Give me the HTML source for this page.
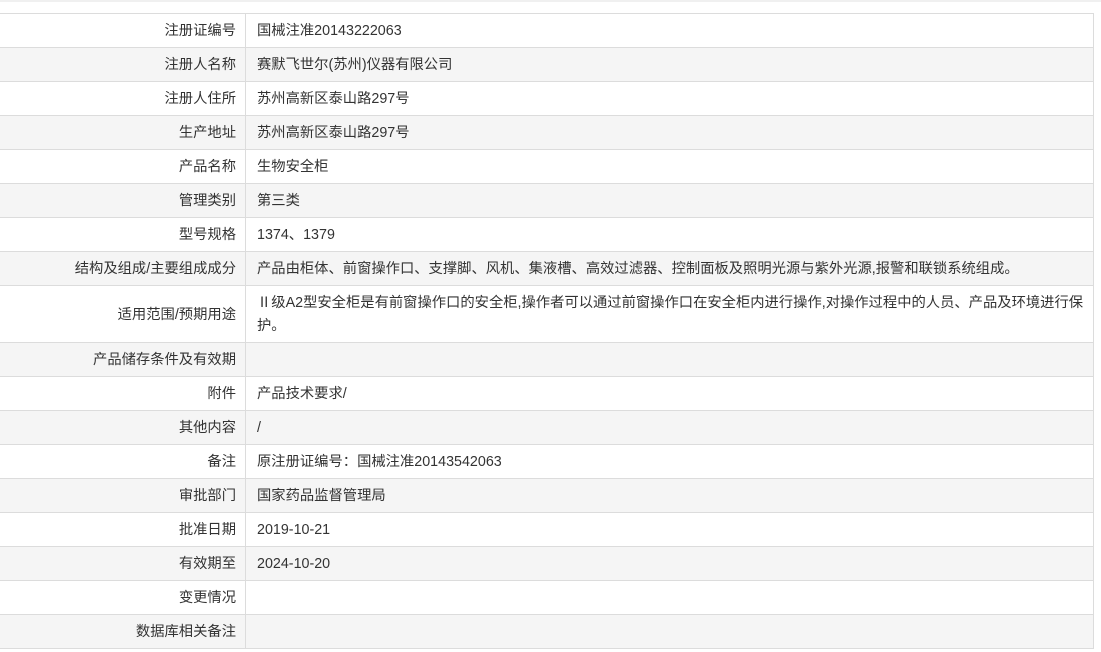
<!DOCTYPE html>
<html><head><meta charset="utf-8"><style>
body{margin:0;background:#fff;font-family:"Liberation Sans","Noto Sans CJK SC",sans-serif;font-size:14.3px;color:#333;}
.top{height:2px;background:#f0f0f0;}
table{position:absolute;left:-1px;top:13px;width:1095px;border-collapse:collapse;table-layout:fixed;}
td{border:1px solid #dcdcdc;height:32px;padding:0;line-height:20px;padding-top:1px;}
td.l{width:236px;text-align:right;padding-right:9px;}
td.r{padding-left:11px;padding-right:8px;}
tr:nth-child(even) td{background:#f5f5f5;}
tr.tall td.l{height:55px;}
tr.tall td.r{vertical-align:top;padding-top:6px;height:50px;line-height:23px;}
</style></head><body><div class="top"></div>
<table>
<tr><td class="l">注册证编号</td><td class="r">国械注准20143222063</td></tr>
<tr><td class="l">注册人名称</td><td class="r">赛默飞世尔(苏州)仪器有限公司</td></tr>
<tr><td class="l">注册人住所</td><td class="r">苏州高新区泰山路297号</td></tr>
<tr><td class="l">生产地址</td><td class="r">苏州高新区泰山路297号</td></tr>
<tr><td class="l">产品名称</td><td class="r">生物安全柜</td></tr>
<tr><td class="l">管理类别</td><td class="r">第三类</td></tr>
<tr><td class="l">型号规格</td><td class="r">1374、1379</td></tr>
<tr><td class="l">结构及组成/主要组成成分</td><td class="r">产品由柜体、前窗操作口、支撑脚、风机、集液槽、高效过滤器、控制面板及照明光源与紫外光源,报警和联锁系统组成。</td></tr>
<tr class="tall"><td class="l">适用范围/预期用途</td><td class="r">Ⅱ级A2型安全柜是有前窗操作口的安全柜,操作者可以通过前窗操作口在安全柜内进行操作,对操作过程中的人员、产品及环境进行保<br>护。</td></tr>
<tr><td class="l">产品储存条件及有效期</td><td class="r"></td></tr>
<tr><td class="l">附件</td><td class="r">产品技术要求/</td></tr>
<tr><td class="l">其他内容</td><td class="r">/</td></tr>
<tr><td class="l">备注</td><td class="r">原注册证编号：国械注准20143542063</td></tr>
<tr><td class="l">审批部门</td><td class="r">国家药品监督管理局</td></tr>
<tr><td class="l">批准日期</td><td class="r">2019-10-21</td></tr>
<tr><td class="l">有效期至</td><td class="r">2024-10-20</td></tr>
<tr><td class="l">变更情况</td><td class="r"></td></tr>
<tr><td class="l">数据库相关备注</td><td class="r"></td></tr>
</table>
</body></html>
